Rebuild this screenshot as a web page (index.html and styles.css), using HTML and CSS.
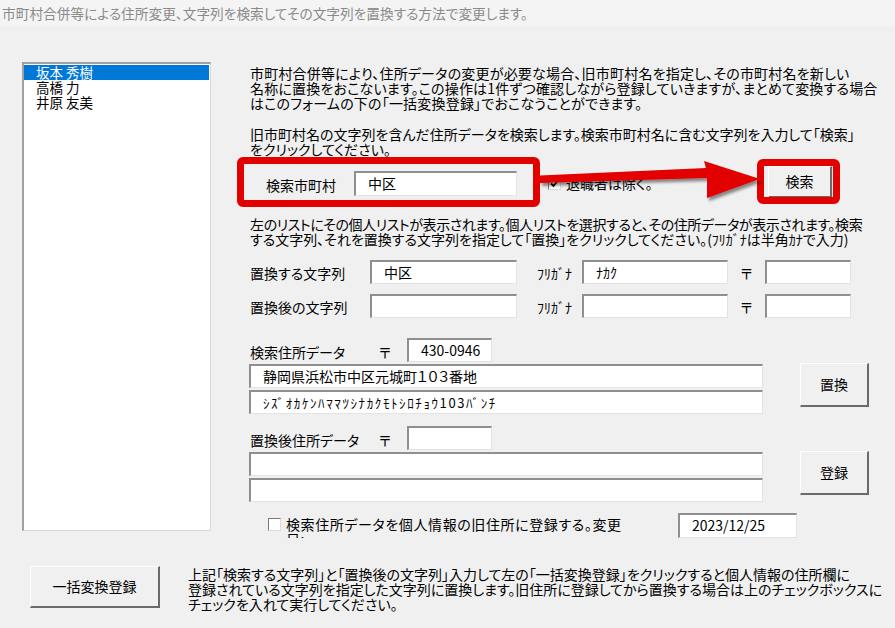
FILE: index.html
```html
<!DOCTYPE html>
<html lang="ja">
<head>
    <meta charset="UTF-8">
    <title>住所一括変更</title>
    <link rel="stylesheet" href="styles.css">
</head>
<body>
<div class="caption">市町村合併等による住所変更、文字列を検索してその文字列を置換する方法で変更します。</div>
<div class="form">
    <div class="main">
        <ul class="listbox">
            <li class="selected">坂本 秀樹</li>
            <li>高橋 力</li>
            <li>井原 友美</li>
        </ul>
        <div class="panel">
            <p class="note intro">市町村合併等により、住所データの変更が必要な場合、旧市町村名を指定し、その市町村名を新しい<br>名称に置換をおこないます。この操作は1件ずつ確認しながら登録していきますが、まとめて変換する場合<br>はこのフォームの下の「一括変換登録」でおこなうことができます。</p>
            <p class="note gap-16">旧市町村名の文字列を含んだ住所データを検索します。検索市町村名に含む文字列を入力して「検索」<br>をクリックしてください。</p>

            <div class="search-row">
                <span class="lbl lbl-city">検索市町村</span>
                <span class="field w-city">中区</span>
                <label class="check check-retire"><span class="box"><svg viewBox="0 0 9 9"><path d="M1 4.5 L3.5 7 L8 1.5" /></svg></span>退職者は除く。</label>
                <button type="button" class="btn btn-search">検索</button>
                <!-- 赤枠と矢印（注釈） -->
                <span class="mark mark-city"></span>
                <span class="mark mark-btn"></span>
                <svg class="arrow" viewBox="0 0 230 50" width="230" height="50">
                    <defs>
                        <filter id="shadow" x="-10%" y="-30%" width="130%" height="180%">
                            <feDropShadow dx="2" dy="3" stdDeviation="1.5" flood-color="#000" flood-opacity="0.45"/>
                        </filter>
                    </defs>
                    <polygon points="0,18.5 166,11 164,4 220,22 167,41 167,21 0,26" fill="#e20000" filter="url(#shadow)"/>
                </svg>
            </div>

            <p class="note gap-p3"><span class="tight">左のリストにその個人リストが表示されます。個人リストを選択すると、その住所データが表示されます。検索</span><br>する文字列、それを置換する文字列を指定して「置換」をクリックしてください。(ﾌﾘｶﾞﾅは半角ｶﾅで入力)</p>

            <div class="replace">
                <span class="lbl">置換する文字列</span>
                <span class="field">中区</span>
                <span class="lbl kana">ﾌﾘｶﾞﾅ</span>
                <span class="field">ﾅｶｸ</span>
                <span class="lbl zip">〒</span>
                <span class="field"></span>

                <span class="lbl">置換後の文字列</span>
                <span class="field"></span>
                <span class="lbl kana">ﾌﾘｶﾞﾅ</span>
                <span class="field"></span>
                <span class="lbl zip">〒</span>
                <span class="field"></span>
            </div>

            <div class="address addr-search">
                <div class="addr-head">
                    <span class="lbl lbl-addr">検索住所データ</span>
                    <span class="lbl">〒</span>
                    <span class="field w-zip">430-0946</span>
                </div>
                <span class="field">静岡県浜松市中区元城町１０３番地</span>
                <span class="field small">ｼｽﾞｵｶｹﾝﾊﾏﾏﾂｼﾅｶｸﾓﾄｼﾛﾁｮｳ103ﾊﾞﾝﾁ</span>
                <button type="button" class="btn btn-side">置換</button>
            </div>

            <div class="address addr-new">
                <div class="addr-head">
                    <span class="lbl lbl-addr">置換後住所データ</span>
                    <span class="lbl">〒</span>
                    <span class="field w-zip"></span>
                </div>
                <span class="field"></span>
                <span class="field"></span>
                <button type="button" class="btn btn-side">登録</button>
            </div>

            <div class="old-row">
                <span class="box"></span>
                <span class="old-lbl">検索住所データを個人情報の旧住所に登録する。変更<br>日:</span>
                <span class="field w-date">2023/12/25</span>
            </div>
        </div>
    </div>

    <div class="bulk">
        <button type="button" class="btn btn-bulk">一括変換登録</button>
        <p class="note">上記「検索する文字列」と「置換後の文字列」入力して左の「一括変換登録」をクリックすると個人情報の住所欄に<br>登録されている文字列を指定した文字列に置換します。旧住所に登録してから置換する場合は上のチェックボックスに<br>チェックを入れて実行してください。</p>
    </div>
</div>
</body>
</html>
```

FILE: styles.css
```css
* {
    box-sizing: border-box;
}

html,
body {
    margin: 0;
    width: 895px;
    height: 628px;
    overflow: hidden;
}

body {
    background: #f0f0f0;
    color: #000;
    font-family: "Noto Sans CJK JP", "Noto Sans", sans-serif;
    font-size: 14px;
    font-feature-settings: "palt";
    line-height: 15px;
}

/* タイトルバー */
.caption {
    height: 26px;
    padding: 5px 0 0 2px;
    background: #f4f4f4;
    color: #8a8a8a;
    font-size: 13.7px;
    line-height: 16px;
    white-space: nowrap;
}

.main {
    display: grid;
    grid-template-columns: 189px 1fr;
    column-gap: 26px;
    padding: 36px 0 0 22px;
}

/* 個人リスト */
.listbox {
    height: 469px;
    margin: 0;
    padding: 1px 1px 0 0;
    list-style: none;
    background: #fff;
    border-top: 2px solid #a0a0a0;
    border-left: 2px solid #a0a0a0;
    border-right: 1px solid #d8d8d8;
    border-bottom: 1px solid #d8d8d8;
}
.listbox li {
    height: 15px;
    padding-left: 12px;
    font-size: 13.5px;
    line-height: 15px;
    white-space: nowrap;
}
.listbox li.selected {
    background: #0078d7;
    color: #fff;
}

.note {
    margin: 0;
    padding-left: 13px;
    white-space: nowrap;
}
.intro {
    margin-top: 4px;
    letter-spacing: 0.2px;
}
.tight {
    letter-spacing: -0.4px;
}
.gap-16 {
    margin-top: 16px;
}
.gap-p3 {
    margin-top: 10px;
}

.lbl {
    white-space: nowrap;
}

/* 入力欄（くぼみ枠） */
.field {
    display: block;
    height: 24px;
    padding: 3px 0 0 12px;
    background: #fff;
    border-top: 2px solid #8f8f8f;
    border-left: 2px solid #8f8f8f;
    border-right: 1px solid #e3e3e3;
    border-bottom: 1px solid #e3e3e3;
    white-space: nowrap;
    overflow: hidden;
}
.field.small {
    font-size: 13px;
    letter-spacing: 1.6px;
}

/* ボタン（浮き出し枠） */
.btn {
    display: block;
    padding: 0;
    background: #f0f0f0;
    color: #000;
    font: inherit;
    border-top: 1px solid #fff;
    border-left: 1px solid #fff;
    border-right: 2px solid #6a6a6a;
    border-bottom: 2px solid #6a6a6a;
}

/* 検索行 */
.search-row {
    position: relative;
    display: flex;
    align-items: center;
    height: 50px;
    padding-top: 3px;
}
.lbl-city {
    width: 117px;
    padding: 3px 0 0 29px;
}
.w-city {
    width: 163px;
    height: 25px;
}
.check {
    display: flex;
    align-items: center;
    gap: 5px;
    white-space: nowrap;
}
.check-retire {
    width: 220px;
    margin-left: 31px;
}
.box {
    display: inline-block;
    flex: none;
    width: 13px;
    height: 13px;
    background: #fff;
    border-top: 1px solid #7a7a7a;
    border-left: 1px solid #7a7a7a;
    border-right: 1px solid #dcdcdc;
    border-bottom: 1px solid #dcdcdc;
}
.box svg {
    display: block;
    width: 11px;
    height: 11px;
    padding: 1px;
}
.box path {
    fill: none;
    stroke: #000;
    stroke-width: 1.8;
}
.btn-search {
    width: 64px;
    height: 32px;
    margin-top: -4px;
}

.mark {
    position: absolute;
    border: 7px solid #e20000;
    border-radius: 6px;
}
.mark-city {
    left: 0;
    top: 0;
    width: 303px;
    height: 50px;
}
.mark-btn {
    left: 520px;
    top: 2px;
    width: 83px;
    height: 45px;
}
.arrow {
    position: absolute;
    left: 303px;
    top: 0;
}

/* 置換文字列 */
.replace {
    display: grid;
    grid-template-columns: 120px 147px 65px 146px 37px 86px;
    grid-auto-rows: 24px;
    row-gap: 10px;
    align-items: center;
    margin-top: 13px;
    padding-left: 13px;
}
.replace .lbl {
    padding-top: 2px;
}
.kana {
    padding-left: 20px;
}
.zip {
    text-align: center;
}

/* 住所データ */
.address {
    display: grid;
    grid-template-columns: 514px 69px;
    column-gap: 37px;
    row-gap: 2px;
    padding-left: 12px;
}
.addr-search {
    margin-top: 20px;
}
.addr-new {
    margin-top: 12px;
}
.addr-head {
    display: flex;
    align-items: center;
    grid-column: 1;
}
.lbl-addr {
    width: 130px;
    padding: 4px 0 0 1px;
}
.addr-head .lbl + .lbl {
    width: 28px;
    padding-top: 4px;
}
.w-zip {
    width: 85px;
}
.address .field {
    grid-column: 1;
}
.btn-side {
    grid-column: 2;
    grid-row: 2 / 4;
    align-self: start;
    width: 69px;
    height: 44px;
    margin-top: -1px;
}

/* 旧住所登録 */
.old-row {
    display: flex;
    align-items: flex-start;
    margin-top: 11px;
    padding-left: 31px;
}
.old-row .box {
    margin-top: 5px;
}
.old-lbl {
    width: 357px;
    height: 25px;
    margin-left: 5px;
    padding-top: 4px;
    letter-spacing: 0.6px;
    overflow: hidden;
    white-space: nowrap;
}
.w-date {
    width: 119px;
    height: 25px;
    margin-left: 35px;
}

/* 一括変換 */
.bulk {
    display: flex;
    align-items: flex-start;
    gap: 28px;
    margin-top: 28px;
    padding-left: 30px;
}
.bulk .note {
    padding: 1px 0 0;
}
.btn-bulk {
    width: 130px;
    height: 42px;
}
```
